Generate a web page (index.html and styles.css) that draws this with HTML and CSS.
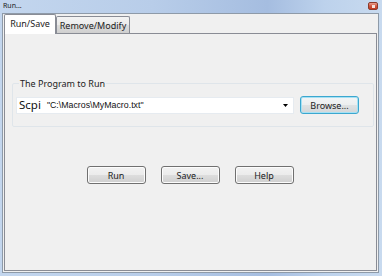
FILE: index.html
```html
<!DOCTYPE html>
<html>
<head>
<meta charset="utf-8">
<link rel="stylesheet" href="styles.css">
</head>
<body>
<div class="window">
  <div class="titlebar">
    <span class="title">Run...</span>
    <span class="close"><span class="close-glyph"></span></span>
  </div>
  <div class="client">
    <div class="tabs">
      <div class="tab active">Run/Save</div>
      <div class="tab">Remove/Modify</div>
    </div>
    <div class="panel">
      <fieldset class="group">
        <legend>The Program to Run</legend>
        <div class="row">
          <div class="combo">
            <span class="cmd">Scpi</span>
            <span class="arg">"C:\Macros\MyMacro.txt"</span>
            <svg class="arrow" width="5" height="3" viewBox="0 0 5 3"><path d="M0 0H5L2.5 3Z" fill="#000"/></svg>
          </div>
          <button class="btn focus">Browse...</button>
        </div>
      </fieldset>
      <div class="actions">
        <button class="btn">Run</button>
        <button class="btn">Save...</button>
        <button class="btn">Help</button>
      </div>
    </div>
  </div>
</div>
</body>
</html>
```

FILE: styles.css
```css
* { box-sizing: border-box; }
html, body { margin: 0; padding: 0; }
body {
  width: 382px;
  height: 276px;
  font-family: "Noto Sans", "Open Sans", sans-serif;
  color: #000;
  overflow: hidden;
}
.window {
  width: 382px;
  height: 276px;
  display: flex;
  flex-direction: column;
  padding: 0 3px 3px 2px;
  background: linear-gradient(to right, #c3d6ee 0%, #b8cde9 40%, #a5bde0 70%, #bdd2ec 85%, #c8daef 100%);
}
.titlebar {
  height: 13px;
  display: flex;
  align-items: center;
  justify-content: space-between;
  padding: 0 1px 0 1px;
}
.title {
  font-size: 7px;
  line-height: 8px;
  color: #1b1b1b;
  margin-top: -2px;
}
.close {
  width: 10px;
  height: 8px;
  margin-top: -1px;
  border: 1px solid #8a3b2c;
  border-radius: 2px;
  background: linear-gradient(to bottom, #e9a08f 0%, #d1573f 50%, #c23a20 100%);
  display: flex;
  align-items: center;
  justify-content: center;
}
.close-glyph {
  width: 3px;
  height: 3px;
  background: #f4e2dc;
}
.client {
  flex: 1;
  display: flex;
  flex-direction: column;
  border: 1px solid #8e9aa8;
  background: #f0f0f0;
  padding: 0 1px 1px 1px;
}
.tabs {
  height: 19px;
  display: flex;
  align-items: flex-end;
  position: relative;
  z-index: 1;
}
.tab {
  font-size: 9px;
  line-height: 11px;
  border: 1px solid #898c95;
  border-bottom: none;
  border-radius: 2px 2px 0 0;
  height: 17px;
  width: 74px;
  display: flex;
  align-items: center;
  justify-content: center;
  background: linear-gradient(to bottom, #f3f3f3 0%, #ebebeb 50%, #dddddd 51%, #cfcfcf 100%);
  color: #222;
}
.tab.active {
  width: 52px;
  height: 20px;
  margin-bottom: -1px;
  background: #ffffff;
  padding-bottom: 2px;
}
.panel {
  flex: 1;
  border: 1px solid #898c95;
  background: #f0f0f0;
  display: flex;
  flex-direction: column;
  padding: 44px 2px 0 7px;
}
.group {
  margin: 0;
  border: 1px solid #dfe5ea;
  border-radius: 2px;
  padding: 7px 10px 12px 3px;
}
.group legend {
  font-size: 9px;
  line-height: 11px;
  padding: 0 1px;
  margin-left: 3px;
  color: #222;
}
.row {
  display: flex;
  align-items: center;
  gap: 6px;
}
.combo {
  width: 278px;
  height: 17px;
  background: #fff;
  border: 1px solid #e6ebf0;
  display: flex;
  align-items: center;
  padding: 0 0 0 2px;
}
.cmd {
  font-size: 11.5px;
  line-height: 14px;
  color: #111;
}
.arg {
  font-family: "Liberation Sans", Arial, sans-serif;
  font-size: 8.8px;
  line-height: 11px;
  margin-left: 6px;
  flex: 1;
  color: #111;
}
.arrow {
  margin-right: 5px;
}
.btn {
  font-family: "Noto Sans", "Open Sans", sans-serif;
  font-size: 9px;
  line-height: 11px;
  width: 59px;
  height: 18px;
  padding: 0;
  border: 1px solid #707070;
  border-radius: 3px;
  color: #222;
  background: linear-gradient(to bottom, #f2f2f2 0%, #ebebeb 50%, #dddddd 51%, #cfcfcf 100%);
  box-shadow: inset 0 0 0 1px #fcfcfc;
}
.btn.focus {
  border-color: #3ca7cf;
  box-shadow: inset 0 0 0 1px #a6e1f4;
  background: linear-gradient(to bottom, #f3f5f6 0%, #eceeef 50%, #dfe2e3 51%, #d3d6d8 100%);
}
.actions {
  display: flex;
  justify-content: center;
  gap: 15px;
  margin-top: 39px;
  padding-right: 6px;
}
```
